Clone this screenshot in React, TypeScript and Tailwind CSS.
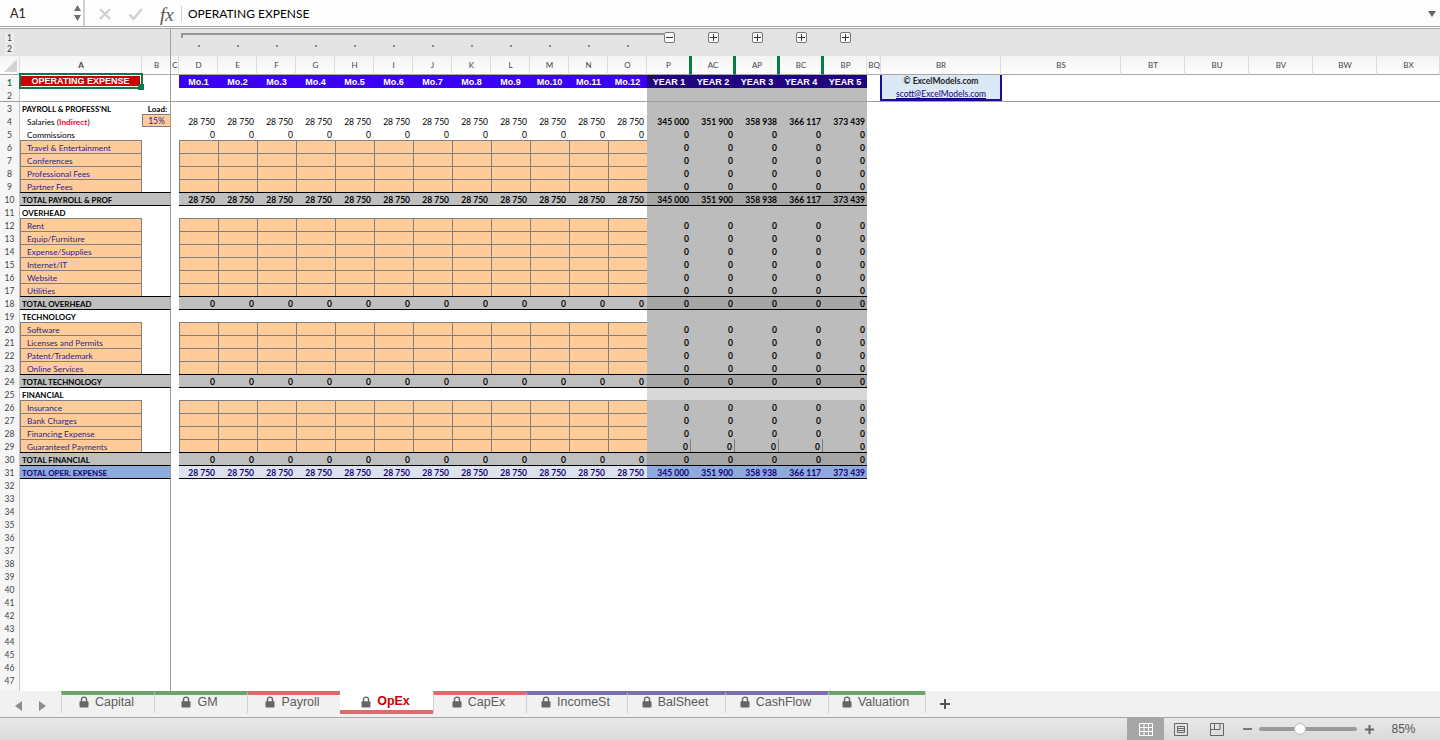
import React from "react";

const grid = "grid grid-cols-[20px_122px_29px_8px_repeat(12,39px)_repeat(5,44px)_14px_120px_120px_repeat(4,64px)_63px]";
const months = ["D", "E", "F", "G", "H", "I", "J", "K", "L", "M", "N", "O"];
const years = ["P", "AC", "AP", "BC", "BP"];
const yearVals = ["345 000", "351 900", "358 938", "366 117", "373 439"];
const mono = Array.from({ length: 12 }, (_, i) => i);

type Row = { label?: string; kind: "blank" | "head" | "input" | "total" | "grand" | "sal" | "com"; m?: string; y?: boolean };
const meta: Record<number, Row> = {
  3: { label: "PAYROLL & PROFESS'NL", kind: "head" },
  4: { kind: "sal", m: "28 750", y: true },
  5: { label: "Commissions", kind: "com", m: "0" },
  6: { label: "Travel & Entertainment", kind: "input" },
  7: { label: "Conferences", kind: "input" },
  8: { label: "Professional Fees", kind: "input" },
  9: { label: "Partner Fees", kind: "input" },
  10: { label: "TOTAL PAYROLL & PROF", kind: "total", m: "28 750", y: true },
  11: { label: "OVERHEAD", kind: "head" },
  12: { label: "Rent", kind: "input" },
  13: { label: "Equip/Furniture", kind: "input" },
  14: { label: "Expense/Supplies", kind: "input" },
  15: { label: "Internet/IT", kind: "input" },
  16: { label: "Website", kind: "input" },
  17: { label: "Utilities", kind: "input" },
  18: { label: "TOTAL OVERHEAD", kind: "total", m: "0" },
  19: { label: "TECHNOLOGY", kind: "head" },
  20: { label: "Software", kind: "input" },
  21: { label: "Licenses and Permits", kind: "input" },
  22: { label: "Patent/Trademark", kind: "input" },
  23: { label: "Online Services", kind: "input" },
  24: { label: "TOTAL TECHNOLOGY", kind: "total", m: "0" },
  25: { label: "FINANCIAL", kind: "head" },
  26: { label: "Insurance", kind: "input" },
  27: { label: "Bank Charges", kind: "input" },
  28: { label: "Financing Expense", kind: "input" },
  29: { label: "Guaranteed Payments", kind: "input" },
  30: { label: "TOTAL FINANCIAL", kind: "total", m: "0" },
  31: { label: "TOTAL OPER. EXPENSE", kind: "grand", m: "28 750", y: true },
};
const blackTop = new Set([10, 11, 18, 19, 24, 25, 30, 31, 32]);

const cell = "flex items-end overflow-hidden whitespace-nowrap leading-[10px]";

function RowNum({ n }: { n: number }) {
  return (
    <div className={`${cell} justify-center border-r border-r-[#c8c8c8] bg-[#f6f6f6] text-[8.5px] ${n === 1 ? "font-bold text-[#0b7a4b]" : "text-[#444]"} ${n === 3 ? "border-t border-t-[#a0a0a0]" : ""}`}>
      {n <= 47 ? n : null}
    </div>
  );
}

function SheetRow({ n }: { n: number }) {
  const r: Row = meta[n] ?? { kind: "blank" };
  const bt = blackTop.has(n);
  const topC = n === 3 ? "border-t border-t-[#a0a0a0]" : bt ? "border-t border-t-black" : "";
  const isGrand = r.kind === "grand";
  const isTotal = r.kind === "total";
  const aBg = isGrand ? "bg-[#8ea9db] text-[#15007a]" : isTotal ? "bg-[#bfbfbf] text-black" : "";
  const line = "border-r border-r-[#a0a0a0]";
  const inYearBand = n >= 2 && n <= 31;

  let a: React.ReactNode = null;
  if (r.kind === "sal") {
    a = (
      <div className={`${cell} pl-[7px] text-[8.3px] text-black`}>
        Salaries&nbsp;<span>(</span><span className="font-bold text-[#ff0033]">Indirect</span><span>)</span>
      </div>
    );
  } else if (r.kind === "input") {
    a = <div className={`${cell} border-t border-r border-l border-[#7f7f7f] bg-[#ffcc99] pl-[6px] text-[8.3px] text-[#2a1f8a]`}>{r.label}</div>;
  } else if (r.kind === "com") {
    a = <div className={`${cell} pl-[7px] text-[8.3px] text-black`}>{r.label}</div>;
  } else if (r.kind === "head") {
    a = <div className={`${cell} pl-[2px] text-[7.9px] font-bold text-black ${topC}`}>{r.label}</div>;
  } else if (isTotal || isGrand) {
    a = <div className={`${cell} pl-[2px] text-[7.9px] font-bold ${aBg} ${topC}`}>{r.label}</div>;
  } else {
    a = <div className={topC} />;
  }

  let b: React.ReactNode = <div className={`${line} ${topC}`} />;
  if (n === 3) b = <div className={`${cell} justify-end pr-[3px] text-[8px] font-bold text-black ${line} ${topC}`}>Load:</div>;
  if (n === 4) b = <div className={`${cell} justify-center border-y border-l border-[#7f7f7f] bg-[#ffcc99] text-[8.5px] text-[#2a1f8a] ${line}`}>15%</div>;
  if (isTotal || isGrand) b = <div className={`${aBg} ${line} ${topC}`} />;

  const monthCells = mono.map((i) => {
    if (r.kind === "input") return <div key={i} className="border-t border-l border-[#7f7f7f] bg-[#ffcc99]" />;
    const bg = isGrand ? "bg-[#dce3ef] font-bold text-[#15007a]" : isTotal ? "bg-[#bfbfbf] font-bold text-black" : "text-black";
    return (
      <div key={i} className={`${cell} justify-end pr-[3px] text-[8.5px] ${bg} ${topC}`}>
        {r.m}
      </div>
    );
  });

  const yearCells = yearVals.map((v, i) => {
    const val = r.y ? v : r.kind === "input" || r.kind === "com" || isTotal || isGrand ? "0" : "";
    const bg = isGrand ? "bg-[#8ea9db] text-[#15007a]" : n === 25 ? "bg-[#d9d9d9]" : isTotal ? "bg-[#a6a6a6] text-black" : inYearBand ? "bg-[#bcbcbc] text-black" : "";
    const tick = n === 29 && i < 4 ? "border-r border-r-[#7f7f7f]" : "";
    return (
      <div key={i} className={`${cell} justify-end pr-[2px] text-[8.5px] font-bold ${bg} ${topC} ${tick}`}>
        {val}
      </div>
    );
  });

  return (
    <>
      <RowNum n={n} />
      {a}
      {b}
      <div className={n === 3 ? topC : ""} />
      {monthCells}
      {yearCells}
      <div className={`col-span-8 ${n === 3 ? topC : ""}`} />
    </>
  );
}

function TopRows() {
  const band = "flex items-center justify-center pt-px text-[9px] leading-none font-bold text-white [font-family:'Liberation_Sans',sans-serif]";
  return (
    <>
      <RowNum n={1} />
      <div className="relative z-10 pt-px">
        <div className="mr-[2px] ml-px flex h-[10px] items-center justify-center bg-[#cc0000] pt-px text-[9px] leading-none font-bold text-white [font-family:'Liberation_Sans',sans-serif]">
          OPERATING EXPENSE
        </div>
        <div className="absolute -top-[2px] -right-px -bottom-px -left-px border-2 border-[#0b7a4b]" />
        <div className="absolute -right-[2px] -bottom-[2px] size-[6px] bg-[#0b7a4b]" />
      </div>
      <div className="border-r border-r-[#a0a0a0]" />
      <div />
      {mono.map((i) => (
        <div key={i} className={`${band} bg-[#3a00f5]`}>Mo.{i + 1}</div>
      ))}
      {yearVals.map((_, i) => (
        <div key={i} className={`${band} bg-[#20047f]`}>YEAR {i + 1}</div>
      ))}
      <div />
      <div className="row-span-2 -mr-px -ml-px flex flex-col items-center border-x-2 border-b-2 border-[#1f0a9e] bg-[#dbe8f6] text-[8.5px] leading-[13px] text-[#15007a]">
        <div className="font-bold text-[#222]">© ExcelModels.com</div>
        <div className="underline">scott@ExcelModels.com</div>
      </div>
      <div className="col-span-6" />
      <RowNum n={2} />
      <div />
      <div className="border-r border-r-[#a0a0a0]" />
      <div />
      {mono.map((i) => <div key={i} />)}
      {yearVals.map((_, i) => <div key={i} className="bg-[#bcbcbc]" />)}
      <div />
      <div className="col-span-6" />
    </>
  );
}

function HeaderRow() {
  const h = "flex items-center justify-center pl-px bg-linear-to-b from-[#f4f4f4] to-[#fdfdfd] border-b border-b-[#a8a8a8] text-[8px] leading-none text-[#444]";
  const sep = "border-r border-r-[#dddddd]";
  const wide = ["BQ", "BR", "BS", "BT", "BU", "BV", "BW", "BX"];
  return (
    <div className={`${grid} h-[19px] shrink-0`}>
      <div className={`${h} ${sep} relative`}>
        <svg width="20" height="18" className="absolute top-0 left-0"><path d="M17 3V16H4Z" fill="#d4d4d4" /></svg>
      </div>
      <div className={`${h} ${sep} font-bold text-[#0b7a4b]`}>A</div>
      <div className={`${h} border-r border-r-[#a0a0a0]`}>B</div>
      <div className={`${h} ${sep}`}>C</div>
      {months.map((m) => <div key={m} className={`${h} ${sep}`}>{m}</div>)}
      {years.map((m, i) => (
        <div key={m} className={`${h} ${i > 0 ? "border-l border-l-[#0b7a4b]" : ""} ${i < 4 ? "border-r-2 border-r-[#0b7a4b]" : sep}`}>{m}</div>
      ))}
      {wide.map((m) => <div key={m} className={`${h} ${sep}`}>{m}</div>)}
    </div>
  );
}

function OutlineBtn({ plus }: { plus?: boolean }) {
  return (
    <div className="relative flex size-[11px] items-center justify-center rounded-[2px] border border-[#777] bg-white">
      <div className="h-px w-[7px] bg-[#333]" />
      {plus && <div className="absolute h-[7px] w-px bg-[#333]" />}
    </div>
  );
}

function OutlineBar() {
  return (
    <div className={`${grid} relative mt-px h-[28px] shrink-0 border-t border-t-[#a8a8a8] bg-[#e4e4e4]`}>
      <div className="col-span-2 flex flex-col gap-px pt-[4px] pl-[5px] text-[8.5px] leading-[10px] text-[#333]">
        <div className="h-[10px] w-[9px] bg-[#eeeeee] text-center">1</div>
        <div className="h-[10px] w-[9px] bg-[#eeeeee] text-center">2</div>
      </div>
      <div className="border-r border-r-[#a0a0a0]" />
      <div />
      {mono.map((i) => (
        <div key={i} className="flex items-start justify-center pt-[16px]">
          <div className="size-[2px] bg-[#8c8c8c]" />
        </div>
      ))}
      {years.map((m, i) => (
        <div key={m} className="flex items-start justify-center pt-[3px] pl-px">
          <OutlineBtn plus={i > 0} />
        </div>
      ))}
      <div className="col-span-8" />
      <svg className="absolute top-[4px] left-[181px]" width="484" height="6"><path d="M1 5V1H484" fill="none" stroke="#969696" strokeWidth="2" /></svg>
    </div>
  );
}

function FormulaBar() {
  return (
    <div className="flex h-[27px] shrink-0 items-stretch border-b border-b-[#a8a8a8] bg-[#fdfdfd]">
      <div className="relative flex w-[85px] shrink-0 items-center border-r-2 border-r-[#cfcfcf] pt-[2px] pl-[10px] text-[12.5px] text-[#222]">
        A1
        <svg className="absolute top-[4px] right-[1px]" width="9" height="18" fill="#6e6e6e"><path d="M4.5 1L8 7H1Z" /><path d="M4.5 17L8 11H1Z" /></svg>
      </div>
      <div className="flex flex-1 items-center pt-[2px]">
        <svg className="ml-[13px]" width="14" height="14" fill="none" stroke="#cfcfcf" strokeWidth="2.2"><path d="M2 2L12 12M12 2L2 12" /></svg>
        <svg className="ml-[16px]" width="16" height="14" fill="none" stroke="#cfcfcf" strokeWidth="2.2"><path d="M1.5 7.5L5.5 12L14 2" /></svg>
        <div className="ml-[16px] w-[20px] text-[19px] leading-none text-[#555] italic [font-family:'Liberation_Serif',serif]">fx</div>
        <div className="ml-px h-[16px] w-px bg-[#d6d6d6]" />
        <div className="ml-[6px] flex-1 text-[12px] text-black">OPERATING EXPENSE</div>
        <svg className="mr-[4px]" width="8" height="6" fill="#666"><path d="M0 0H8L4 6Z" /></svg>
      </div>
    </div>
  );
}

function Lock() {
  return (
    <svg width="10" height="12" viewBox="0 0 10 12" className="shrink-0">
      <path d="M2.5 6V3.6a2.5 2.5 0 0 1 5 0V6" fill="none" stroke="#666" strokeWidth="1.4" />
      <rect x="0.5" y="5.2" width="9" height="6.3" rx="1" fill="#666" />
    </svg>
  );
}

const tabs = [
  { name: "Capital", w: "w-[93px]", c: "border-t-[#6aa56e]" },
  { name: "GM", w: "w-[93px]", c: "border-t-[#6aa56e]" },
  { name: "Payroll", w: "w-[93px]", c: "border-t-[#d96c6c]" },
  { name: "OpEx", w: "w-[93px]", c: "", active: true },
  { name: "CapEx", w: "w-[93px]", c: "border-t-[#d96c6c]" },
  { name: "IncomeSt", w: "w-[101px]", c: "border-t-[#7b6fb0]" },
  { name: "BalSheet", w: "w-[98px]", c: "border-t-[#7b6fb0]" },
  { name: "CashFlow", w: "w-[103px]", c: "border-t-[#7b6fb0]" },
  { name: "Valuation", w: "w-[97px]", c: "border-t-[#6aa56e]" },
];

function TabBar() {
  return (
    <div className="flex h-[27px] shrink-0 border-b border-b-[#a8a8a8] bg-[#f1f1f1] text-[12.5px] [font-family:'Liberation_Sans',sans-serif]">
      <div className="flex w-[61px] shrink-0 items-center gap-[13px] pt-[3px] pl-[14px]">
        <svg width="10" height="12" fill="#8c8c8c"><path d="M8 1V11L1 6Z" /></svg>
        <svg width="10" height="12" fill="#8c8c8c"><path d="M2 1V11L9 6Z" /></svg>
      </div>
      {tabs.map((t) =>
        t.active ? (
          <div key={t.name} className={`${t.w} flex h-[23px] shrink-0 items-center justify-center gap-[6px] border-b-[4px] border-b-[#d96c6c] bg-white pt-[2px] pr-[2px]`}>
            <Lock />
            <span className="font-bold text-[#cc0000]">{t.name}</span>
          </div>
        ) : (
          <div key={t.name} className={`${t.w} flex h-[22px] shrink-0 items-center justify-center gap-[6px] border-t-[4px] ${t.c} border-l border-l-[#d0d0d0] pr-[3px] pb-[4px] text-[#5c5c5c]`}>
            <Lock />
            <span>{t.name}</span>
          </div>
        ),
      )}
      <div className="flex h-[22px] w-[38px] items-center justify-center border-l border-l-[#d0d0d0] pt-[3px]">
        <svg width="12" height="12" stroke="#555" strokeWidth="2"><path d="M6 1V11M1 6H11" /></svg>
      </div>
    </div>
  );
}

function StatusBar() {
  return (
    <div className="flex h-[22px] shrink-0 items-stretch justify-end bg-linear-to-b from-[#e9e9e9] to-[#d9d9d9] pr-[7px]">
      <div className="flex w-[37px] items-center justify-center bg-[#a6a6a6]">
        <svg width="14" height="13" fill="none" stroke="#fff"><path d="M.5.5H13.5V12.5H.5ZM.5 4.5H13.5M.5 8.5H13.5M5 .5V12.5M9.5 .5V12.5" /></svg>
      </div>
      <div className="flex w-[34px] items-center justify-center">
        <svg width="14" height="13" fill="none" stroke="#666"><path d="M.5.5H13.5V12.5H.5ZM3.5 3.5H10.5V9.5H3.5ZM3.5 5.5H10.5M3.5 7.5H10.5" /></svg>
      </div>
      <div className="flex w-[38px] items-center justify-center">
        <svg width="14" height="13" fill="none" stroke="#666"><path d="M.5.5H13.5V12.5H.5ZM.5 6.5H10M4.5.5V6.5M10 .5V6.5" /></svg>
      </div>
      <div className="ml-[7px] flex items-center">
        <div className="h-[2px] w-[9px] bg-[#777]" />
      </div>
      <div className="relative ml-[7px] flex w-[98px] items-center">
        <div className="h-[4px] w-full rounded-full bg-[#9a9a9a]" />
        <div className="absolute left-[35px] size-[12px] rounded-full border border-[#bbb] bg-white" />
      </div>
      <div className="ml-[8px] flex items-center">
        <svg width="9" height="9" stroke="#666" strokeWidth="2"><path d="M4.5 0V9M0 4.5H9" /></svg>
      </div>
      <div className="flex w-[59px] items-center justify-center text-[12px] text-[#555] [font-family:'Liberation_Sans',sans-serif]">85%</div>
    </div>
  );
}

export default function App() {
  const rows = Array.from({ length: 46 }, (_, i) => i + 3);
  return (
    <div className="flex h-[740px] w-[1440px] flex-col overflow-hidden bg-white [font-family:Lato,'Open_Sans',sans-serif]">
      <FormulaBar />
      <OutlineBar />
      <HeaderRow />
      <div className={`${grid} h-[616px] shrink-0 grid-rows-[repeat(47,13px)_5px]`}>
        <TopRows />
        {rows.map((n) => <SheetRow key={n} n={n} />)}
      </div>
      <TabBar />
      <StatusBar />
    </div>
  );
}
